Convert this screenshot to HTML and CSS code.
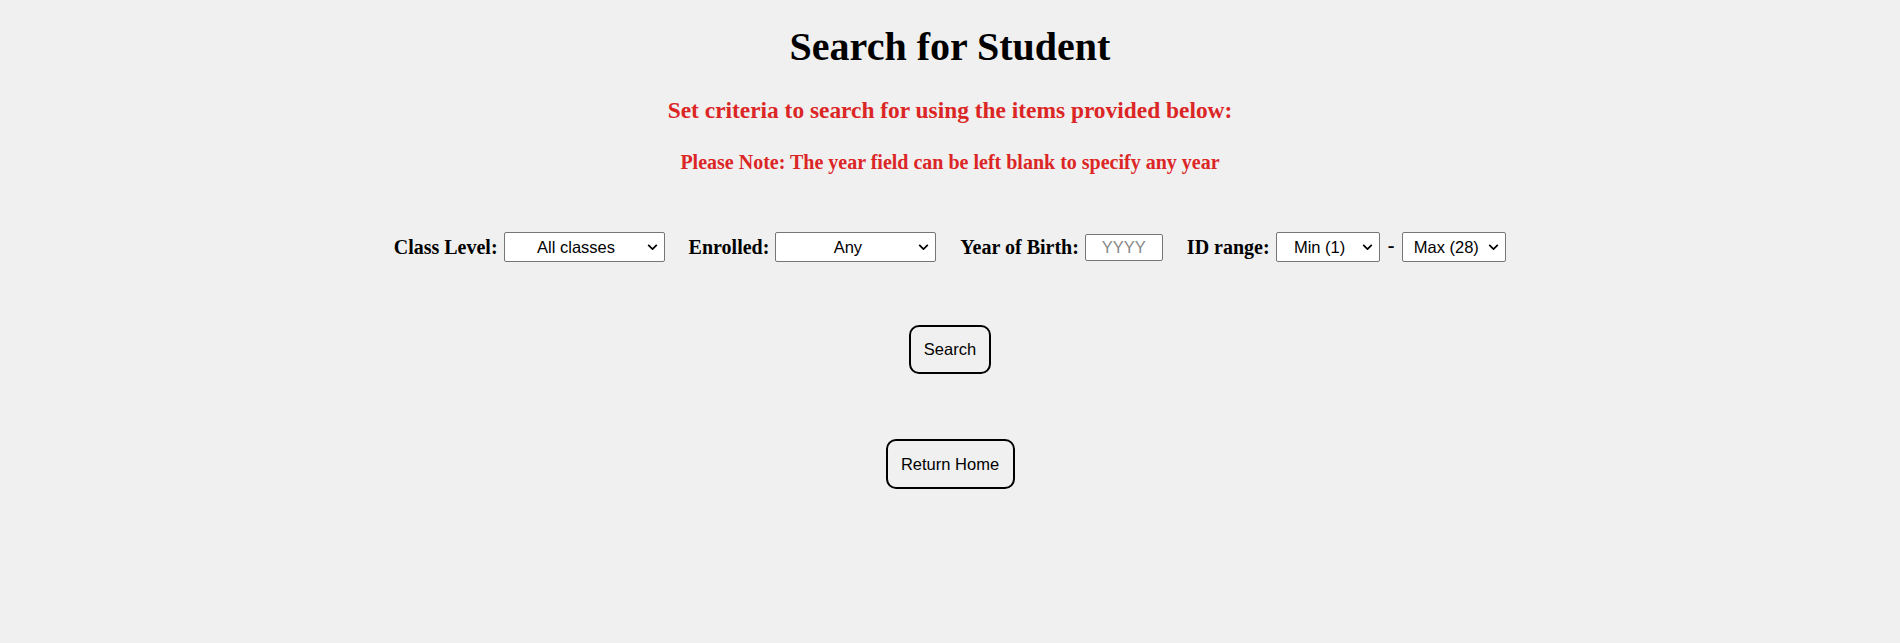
FILE: index.html
```html
<!DOCTYPE html>
<html lang="en">
<head>
<meta charset="utf-8">
<title>Search for Student</title>
<link rel="stylesheet" href="styles.css">
</head>
<body>
<main class="page">
  <h1 class="title">Search for Student</h1>
  <h3 class="subtitle">Set criteria to search for using the items provided below:</h3>
  <h4 class="note">Please Note: The year field can be left blank to specify any year</h4>
  <form class="criteria">
    <div class="field">
      <label class="label" for="cls">Class Level:</label>
      <select id="cls" class="select select-wide"><option>All classes</option></select>
    </div>
    <div class="field">
      <label class="label" for="enr">Enrolled:</label>
      <select id="enr" class="select select-wide"><option>Any</option></select>
    </div>
    <div class="field">
      <label class="label" for="yob">Year of Birth:</label>
      <input id="yob" class="year" type="text" placeholder="YYYY">
    </div>
    <div class="field">
      <label class="label" for="idmin">ID range:</label>
      <select id="idmin" class="select select-narrow"><option>Min (1)</option></select>
      <span class="dash">-</span>
      <select id="idmax" class="select select-narrow"><option>Max (28)</option></select>
    </div>
  </form>
  <button class="btn btn-search" type="button">Search</button>
  <button class="btn btn-home" type="button">Return Home</button>
</main>
</body>
</html>
```

FILE: styles.css
```css
html, body {
  margin: 0;
  padding: 0;
  background: #f0f0f0;
}

body {
  font-family: "Liberation Serif", "Times New Roman", serif;
  color: #000;
}

.page {
  display: flex;
  flex-direction: column;
  align-items: center;
}

.title {
  margin: 23px 0 0;
  font-size: 40px;
  font-weight: bold;
  line-height: normal;
}

.subtitle {
  margin: 27px 0 0;
  font-size: 23.4px;
  font-weight: bold;
  color: #dc2626;
  line-height: normal;
}

.note {
  margin: 27px 0 0;
  font-size: 20px;
  font-weight: bold;
  color: #dc2626;
  line-height: normal;
}

.criteria {
  margin: 58px 0 0;
  display: flex;
  align-items: center;
  gap: 24px;
  height: 30px;
}

.field {
  display: flex;
  align-items: center;
  gap: 6px;
}

.label {
  font-size: 20px;
  font-weight: bold;
}

.select {
  box-sizing: border-box;
  height: 30px;
  padding: 0 18px 0 2px;
  font-family: "Liberation Sans", Arial, sans-serif;
  font-size: 16.5px;
  text-align: center;
  text-align-last: center;
  color: #000;
  border: 1px solid #767676;
  border-radius: 2px;
  appearance: none;
  -webkit-appearance: none;
  background-color: #fff;
  background-image: url("data:image/svg+xml;utf8,<svg xmlns='http://www.w3.org/2000/svg' viewBox='0 0 12 7'><path d='M1 1 L6 6 L11 1' fill='none' stroke='black' stroke-width='2'/></svg>");
  background-repeat: no-repeat;
  background-position: right 6px center;
  background-size: 11px 6px;
}

.select-wide {
  width: 161px;
}

.select-narrow {
  width: 104px;
}

.dash {
  font-size: 20px;
  font-weight: bold;
  margin: 0 2px 3px;
}

.year {
  box-sizing: border-box;
  width: 78px;
  height: 27px;
  font-family: "Liberation Sans", Arial, sans-serif;
  font-size: 16.5px;
  text-align: center;
  background: #fff;
  border: 1px solid #767676;
  border-radius: 2px;
  padding: 1px 2px;
}

.year::placeholder {
  color: #8a8a8a;
}

.btn {
  box-sizing: border-box;
  height: 49px;
  font-family: "Liberation Sans", Arial, sans-serif;
  font-size: 16.5px;
  color: #000;
  background: #f0f0f0;
  border: 2px solid #000;
  border-radius: 10px;
  padding: 0 10px;
}

.btn-search {
  margin-top: 63px;
  width: 82px;
}

.btn-home {
  margin-top: 65px;
  width: 129px;
  height: 50px;
}
```
